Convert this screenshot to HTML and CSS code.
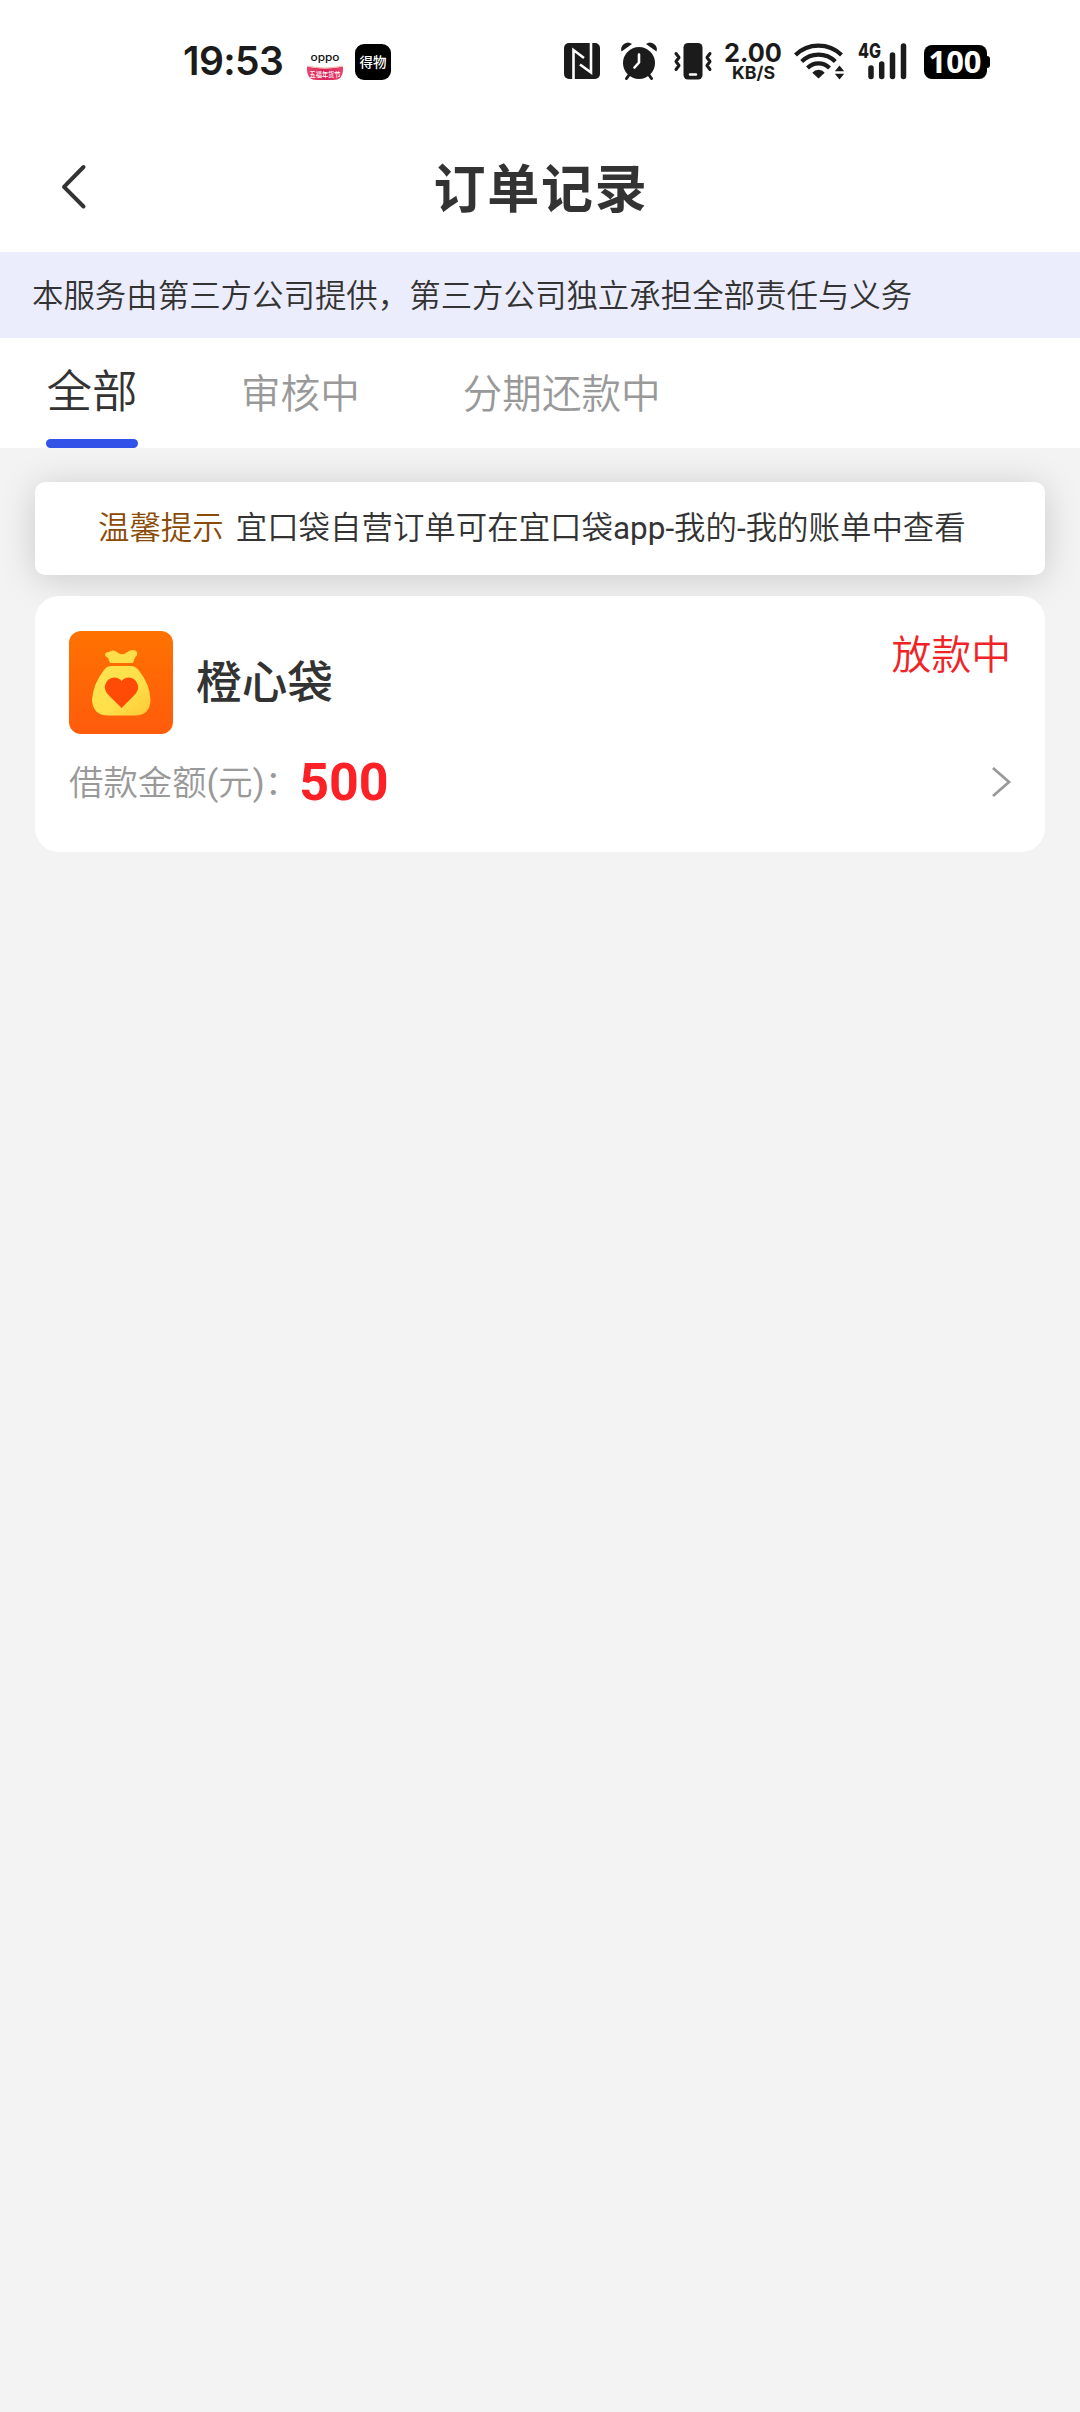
FILE: index.html
```html
<!DOCTYPE html>
<html lang="zh-CN">
<head>
<meta charset="utf-8">
<title>订单记录</title>
<link rel="stylesheet" href="styles.css">
</head>
<body>
<div class="status-bar">
  <span class="clock">19:53</span>
  <svg class="app-oppo" width="38" height="38" viewBox="0 0 38 38">
    <defs><linearGradient id="ribbon" x1="0" y1="0" x2="1" y2="0"><stop offset="0" stop-color="#e8456a"/><stop offset=".5" stop-color="#d81f5c"/><stop offset="1" stop-color="#e8456a"/></linearGradient></defs>
    <path d="M1 23.500Q19 27.500 37 23.500V27Q37 37 27 37H11Q1 37 1 27Z" fill="url(#ribbon)"/>
    <path d="M1 23Q19 27 37 23" fill="none" stroke="#f6b9a5" stroke-width="1"/>
    <text class="oppo-name" x="19" y="18" text-anchor="middle" textLength="29" lengthAdjust="spacingAndGlyphs">oppo</text>
    <text class="oppo-tag" x="19" y="34" text-anchor="middle" textLength="31" lengthAdjust="spacingAndGlyphs">五福年货节</text>
  </svg>
  <span class="app-dewu">得物</span>
  <svg class="nfc" width="36" height="36" viewBox="0 0 36 36">
    <rect width="36" height="36" rx="5" fill="#1b1b1b"/>
    <path d="M9.500 36V7L20 15M27 0V29.500L16 21.500" fill="none" stroke="#fff" stroke-width="2.600"/>
  </svg>
  <svg class="alarm" width="38" height="38" viewBox="0 0 38 38">
    <g fill="#1b1b1b"><circle cx="19" cy="21" r="16"/>
    <path d="M1.500 9.500Q0 5 4 2Q8 -1 12 2ZM36.500 9.500Q38 5 34 2Q30 -1 26 2Z"/></g>
    <path d="M9 33L6.500 36.500M29 33L31.500 36.500" stroke="#1b1b1b" stroke-width="3" stroke-linecap="round"/>
    <path d="M19 12.500V20.500L14.500 25.500" fill="none" stroke="#fff" stroke-width="2.600" stroke-linecap="round" stroke-linejoin="round"/>
  </svg>
  <svg class="vibrate" width="38" height="37" viewBox="0 0 38 37">
    <rect x="9.500" y="0" width="19" height="36.500" rx="4.500" fill="#1b1b1b"/>
    <path d="M16 31.500H22" stroke="#fff" stroke-width="2.400" stroke-linecap="round"/>
    <path d="M2 10L5 14L2 18L5 22L2 26M36 10L33 14L36 18L33 22L36 26" transform="translate(0 .5)" fill="none" stroke="#1b1b1b" stroke-width="3" stroke-linecap="round" stroke-linejoin="round"/>
  </svg>
  <svg class="net-speed" width="58" height="37" viewBox="0 0 58 37">
    <text class="speed" x="0" y="19.200" textLength="58" lengthAdjust="spacingAndGlyphs">2.00</text>
    <text class="unit" x="8" y="36" textLength="43" lengthAdjust="spacingAndGlyphs">KB/S</text>
  </svg>
  <svg class="wifi" width="52" height="37" viewBox="0 0 52 37">
    <g fill="none" stroke="#1b1b1b" stroke-width="4.200">
      <path d="M1.500 12A33 33 0 0 1 47.500 12"/>
      <path d="M7.700 18.500A24 24 0 0 1 41.300 18.500"/>
      <path d="M13.500 25A15.600 15.600 0 0 1 35.500 25"/>
    </g>
    <path d="M24.500 35.500L18.300 29.800A8 8 0 0 1 30.700 29.800Z" fill="#1b1b1b"/>
    <path d="M45.500 22.500L50.200 28.300H40.800ZM45.500 36.500L50.200 30.700H40.800Z" fill="#1b1b1b"/>
  </svg>
  <svg class="signal" width="49" height="37" viewBox="0 0 49 37">
    <text class="gen" x="0" y="14.800" textLength="23" lengthAdjust="spacingAndGlyphs">4G</text>
    <path d="M13 25V33.500M23.700 21V33.500M34.500 12V33.500M45.500 3V33.500" stroke="#1b1b1b" stroke-width="5.500" stroke-linecap="round"/>
  </svg>
  <svg class="battery" width="67" height="34" viewBox="0 0 67 34">
    <rect width="63" height="34" rx="8" fill="#000"/>
    <rect x="59" y="11" width="7" height="12" rx="3" fill="#000"/>
    <text class="level" x="31" y="28" text-anchor="middle" textLength="53" lengthAdjust="spacingAndGlyphs">100</text>
  </svg>
</div>
<header class="nav">
  <svg class="back" width="26" height="46" viewBox="0 0 26 46"><path d="M23.500 3L4 22.800L23.500 42.500" fill="none" stroke="#333" stroke-width="4" stroke-linecap="round" stroke-linejoin="round"/></svg>
  <h1 class="title">订单记录</h1>
</header>
<div class="notice">本服务由第三方公司提供，第三方公司独立承担全部责任与义务</div>
<nav class="tabs">
  <span class="tab active">全部</span>
  <span class="tab">审核中</span>
  <span class="tab">分期还款中</span>
</nav>
<main class="content">
  <div class="tip"><span class="tip-label">温馨提示</span><span>宜口袋自营订单可在宜口袋<span class="latin">app-</span>我的<span class="latin">-</span>我的账单中查看</span></div>
  <section class="order">
    <div class="order-head">
      <svg class="logo" width="104" height="104" viewBox="0 0 104 104">
        <defs>
          <linearGradient id="tile" x1="0" y1="0" x2="0" y2="1"><stop offset="0" stop-color="#ff7200"/><stop offset="1" stop-color="#ff5b0c"/></linearGradient>
          <linearGradient id="bag" x1="0" y1="0" x2="1" y2="1"><stop offset="0" stop-color="#ffe450"/><stop offset=".6" stop-color="#ffdf49"/><stop offset="1" stop-color="#fdc735"/></linearGradient>
        </defs>
        <rect width="104" height="103" rx="12" fill="url(#tile)"/>
        <path d="M36 24Q36 21 40 21Q43 18.500 46 20L51 23H55L61 19.500Q66 18 68 21Q69 24 66 26.500L64 32H41L39 27Q36 25 36 24Z" fill="#ffdf49"/>
        <path d="M42 35H62Q66 35 69.500 39Q81 53 81.500 69Q81 84.500 66 84.500H39Q24 84.500 23 69Q24 53 35 39Q38 35 42 35Z" fill="url(#bag)"/>
        <path d="M52.500 77L39.500 64Q35 59 36 54.500Q38 47 45 46.500Q50 46.500 52.500 50Q55 46.500 60 46.500Q67 47 69 54.500Q70 59 65.500 64Z" fill="#ff4b05"/>
      </svg>
      <span class="name">橙心袋</span>
      <span class="state">放款中</span>
    </div>
    <div class="order-row">
      <span class="label">借款金额<span class="latin">(</span>元<span class="latin">)</span>：</span>
      <span class="amount">500</span>
      <svg class="arrow" width="20" height="32" viewBox="0 0 20 32"><path d="M2 2L18 16L2 30" fill="none" stroke="#999" stroke-width="2.800"/></svg>
    </div>
  </section>
</main>
</body>
</html>
```
FILE: styles.css
```css
* { box-sizing: border-box; }
body {
  margin: 0;
  min-height: 2412px;
  background: #f3f3f3;
  color: #333;
  font-family: Roboto, "Noto Sans CJK SC", sans-serif;
}
svg { display: block; flex: none; overflow: visible; }

.status-bar {
  display: flex;
  align-items: flex-start;
  height: 126px;
  padding: 43px 0 0 183px;
  background: #fff;
  color: #1b1b1b;
  font-family: Inter, sans-serif;
}
.clock {
  width: 123px;
  line-height: 36px;
  font-size: 39px;
  font-weight: 600;
  letter-spacing: -.6px;
}
.oppo-name { font: 500 10.500px Inter, sans-serif; fill: #111; }
.oppo-tag { font: 500 7px "Noto Sans CJK SC", sans-serif; fill: #fff; }
.app-dewu {
  width: 36px;
  height: 36px;
  margin: 1px 173px 0 11px;
  border-radius: 9px;
  background: #000;
  color: #fff;
  font: 500 13.500px/35px "Noto Sans CJK SC", sans-serif;
  text-align: center;
}
.alarm { margin: -1px 16px 0 20px; }
.net-speed { margin: 0 12px; }
.speed { font: 700 26px Inter, sans-serif; fill: #1b1b1b; }
.unit { font: 700 17.500px Inter, sans-serif; fill: #1b1b1b; }
.signal { margin: 0 17px 0 12px; }
.gen { font: 800 20px Inter, sans-serif; fill: #1b1b1b; }
.battery { margin-top: 2px; }
.level { font: 700 31px "Noto Sans", sans-serif; fill: #fff; }

.nav {
  display: grid;
  grid-template-columns: 60px 1fr 60px;
  align-items: center;
  height: 126px;
  padding: 0 60px;
  background: #fff;
}
.back { margin-top: -5px; }
.title {
  margin: 0;
  padding: 4px 0 0 2px;
  font-size: 52px;
  font-weight: 700;
  line-height: 72px;
  letter-spacing: 1.800px;
  text-align: center;
}
.notice {
  height: 86px;
  padding: 1px 0 0 32px;
  background: #ebedfc;
  font-size: 31.450px;
  font-weight: 350;
  line-height: 87px;
  white-space: nowrap;
}
.tabs {
  display: flex;
  gap: 103px;
  height: 110px;
  padding-left: 46px;
  background: #fff;
}
.tab {
  color: #999;
  font-size: 39.600px;
  font-weight: 350;
  line-height: 113px;
}
.tab.active {
  display: flex;
  flex-direction: column;
  align-items: center;
  width: 92px;
  padding-top: 9px;
  color: #333;
  font-size: 45.500px;
  line-height: 92px;
}
.tab.active::after {
  content: "";
  width: 92px;
  height: 9px;
  border-radius: 4.500px;
  background: #3353e8;
}
.content {
  display: flex;
  flex-direction: column;
  gap: 21px;
  padding: 34px 35px;
}
.tip {
  display: flex;
  gap: 12px;
  height: 93px;
  padding-left: 63px;
  border-radius: 10px;
  background: #fff;
  box-shadow: 0 4px 36px rgba(0, 0, 0, .17);
  font-size: 31.450px;
  font-weight: 350;
  line-height: 93px;
  white-space: nowrap;
}
.latin { font-weight: 400; }
.tip-label { color: #8a4b08; }
.order {
  height: 256px;
  padding: 35px 34px 0;
  border-radius: 24px;
  background: #fff;
}
.order-head { display: flex; height: 104px; }
.name {
  margin-left: 23px;
  font-size: 45.700px;
  font-weight: 500;
  line-height: 106px;
}
.state {
  margin-left: auto;
  color: #f02326;
  font-size: 39.800px;
  font-weight: 350;
  line-height: 49px;
}
.order-row { display: flex; align-items: center; height: 94px; }
.label { padding-bottom: 5px; color: #999; font-size: 34.400px; font-weight: 350; }
.amount { color: #fc2127; font-size: 52px; font-weight: 700; }
.arrow { margin-left: auto; }
```
